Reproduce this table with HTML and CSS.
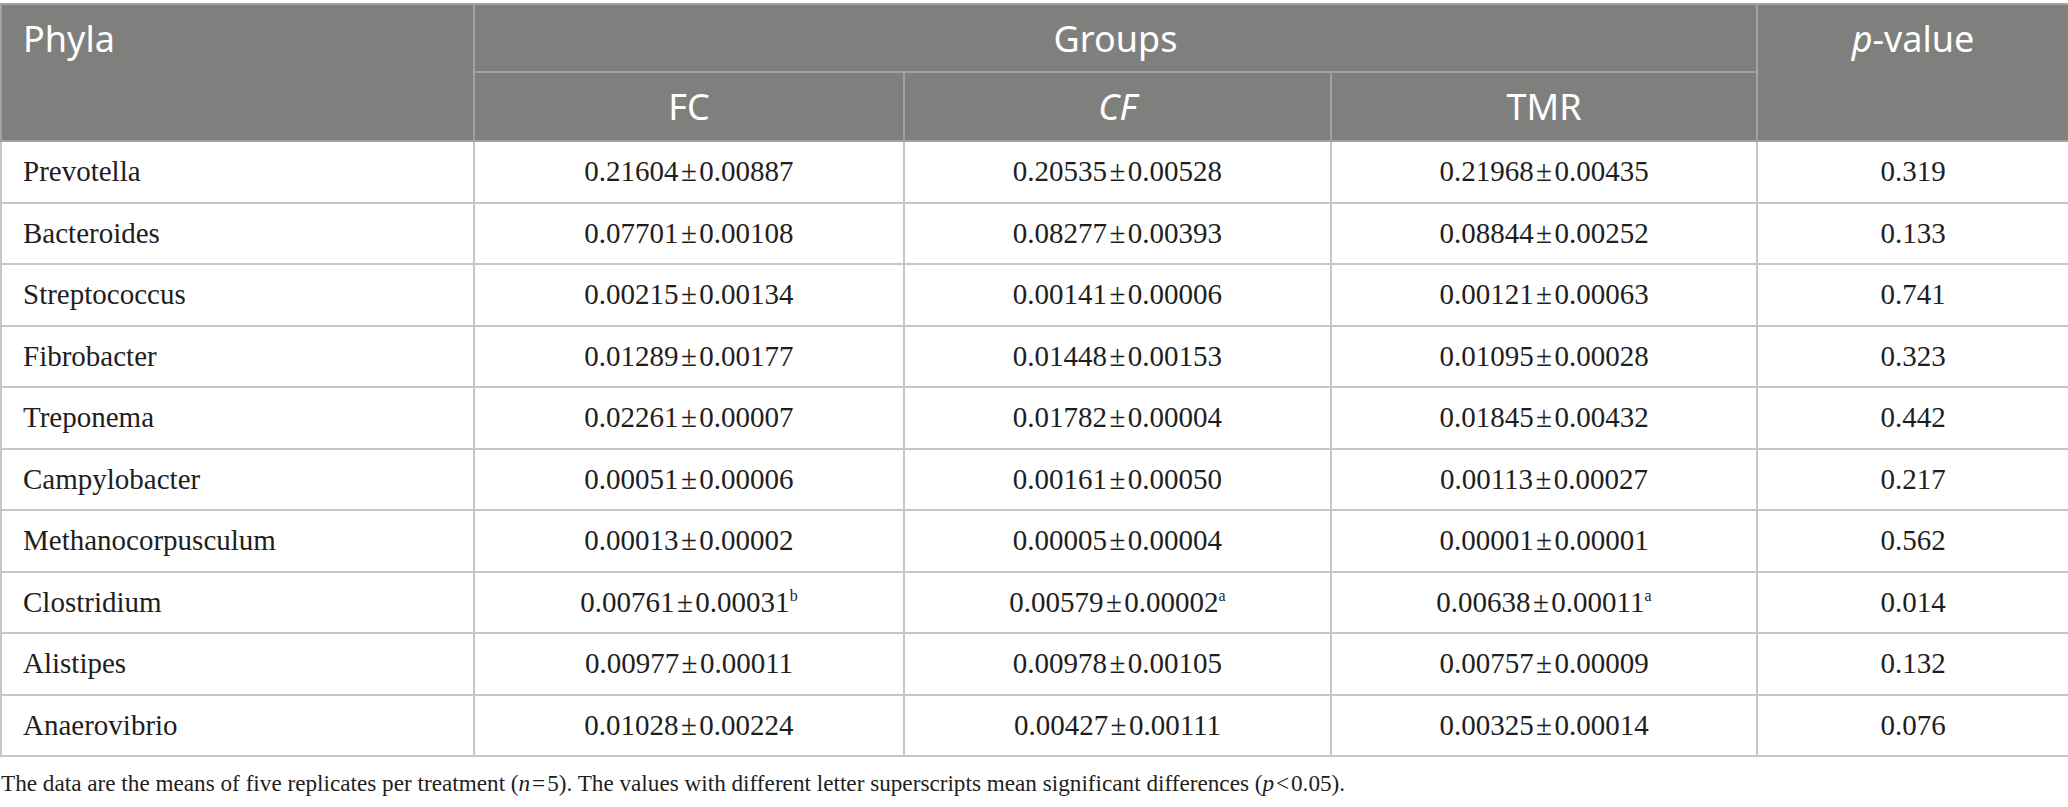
FILE: index.html
```html
<!DOCTYPE html>
<html>
<head>
<meta charset="utf-8">
<link rel="stylesheet" href="styles.css">
</head>
<body>
<div class="wrap">
<table class="data">
  <colgroup>
    <col class="c1"><col class="c2"><col class="c3"><col class="c4"><col class="c5">
  </colgroup>
  <thead>
    <tr class="h1">
      <th class="phyla" rowspan="2">Phyla</th>
      <th colspan="3" class="grp">Groups</th>
      <th class="pv" rowspan="2"><i>p</i>-value</th>
    </tr>
    <tr class="h2">
      <th>FC</th>
      <th><i>CF</i></th>
      <th>TMR</th>
    </tr>
  </thead>
  <tbody>
    <tr><td>Prevotella</td><td>0.21604&#8202;±&#8202;0.00887</td><td>0.20535&#8202;±&#8202;0.00528</td><td>0.21968&#8202;±&#8202;0.00435</td><td>0.319</td></tr>
    <tr><td>Bacteroides</td><td>0.07701&#8202;±&#8202;0.00108</td><td>0.08277&#8202;±&#8202;0.00393</td><td>0.08844&#8202;±&#8202;0.00252</td><td>0.133</td></tr>
    <tr><td>Streptococcus</td><td>0.00215&#8202;±&#8202;0.00134</td><td>0.00141&#8202;±&#8202;0.00006</td><td>0.00121&#8202;±&#8202;0.00063</td><td>0.741</td></tr>
    <tr><td>Fibrobacter</td><td>0.01289&#8202;±&#8202;0.00177</td><td>0.01448&#8202;±&#8202;0.00153</td><td>0.01095&#8202;±&#8202;0.00028</td><td>0.323</td></tr>
    <tr><td>Treponema</td><td>0.02261&#8202;±&#8202;0.00007</td><td>0.01782&#8202;±&#8202;0.00004</td><td>0.01845&#8202;±&#8202;0.00432</td><td>0.442</td></tr>
    <tr><td>Campylobacter</td><td>0.00051&#8202;±&#8202;0.00006</td><td>0.00161&#8202;±&#8202;0.00050</td><td>0.00113&#8202;±&#8202;0.00027</td><td>0.217</td></tr>
    <tr><td>Methanocorpusculum</td><td>0.00013&#8202;±&#8202;0.00002</td><td>0.00005&#8202;±&#8202;0.00004</td><td>0.00001&#8202;±&#8202;0.00001</td><td>0.562</td></tr>
    <tr><td>Clostridium</td><td>0.00761&#8202;±&#8202;0.00031<sup>b</sup></td><td>0.00579&#8202;±&#8202;0.00002<sup>a</sup></td><td>0.00638&#8202;±&#8202;0.00011<sup>a</sup></td><td>0.014</td></tr>
    <tr><td>Alistipes</td><td>0.00977&#8202;±&#8202;0.00011</td><td>0.00978&#8202;±&#8202;0.00105</td><td>0.00757&#8202;±&#8202;0.00009</td><td>0.132</td></tr>
    <tr><td>Anaerovibrio</td><td>0.01028&#8202;±&#8202;0.00224</td><td>0.00427&#8202;±&#8202;0.00111</td><td>0.00325&#8202;±&#8202;0.00014</td><td>0.076</td></tr>
  </tbody>
</table>
<p class="note">The data are the means of five replicates per treatment (<i>n</i>&#8202;=&#8202;5). The values with different letter superscripts mean significant differences (<i>p</i>&#8202;&lt;&#8202;0.05).</p>
</div>
</body>
</html>
```

FILE: styles.css
```css
html, body {
  margin: 0;
  padding: 0;
  background: #ffffff;
}
.wrap {
  padding-top: 3px;
  width: 2068px;
}
.data {
  border-collapse: collapse;
  table-layout: fixed;
  width: 2068px;
  font-family: "Liberation Serif", "Times New Roman", serif;
  color: #1e1e1e;
}
.c1 { width: 473px; }
.c2 { width: 430px; }
.c3 { width: 427px; }
.c4 { width: 426px; }
.c5 { width: 312px; }
.data th {
  background: #7f807e;
  color: #ffffff;
  font-family: "Noto Sans", "Open Sans", sans-serif;
  font-weight: 400;
  font-size: 36px;
  border: 2px solid #a2a3a1;
  padding: 0;
  text-align: center;
  vertical-align: middle;
}
.data .h1 th { height: 66px; }
.data .h2 th { height: 67px; }
.data th.phyla {
  text-align: left;
  vertical-align: top;
  padding: 9px 0 0 21px;
}
.data th.pv {
  vertical-align: top;
  padding-top: 9px;
}
.data td {
  height: 59.5px;
  padding: 0;
  border: 2px solid #c6c6c6;
  text-align: center;
  vertical-align: middle;
  font-size: 29px;
}
.data td:first-child {
  text-align: left;
  padding-left: 21px;
}
.data sup {
  font-size: 16px;
  line-height: 0;
  vertical-align: 11px;
}
.note {
  margin: 13px 0 0 1px;
  font-family: "Liberation Serif", "Times New Roman", serif;
  font-size: 23.2px;
  color: #1e1e1e;
}
```
